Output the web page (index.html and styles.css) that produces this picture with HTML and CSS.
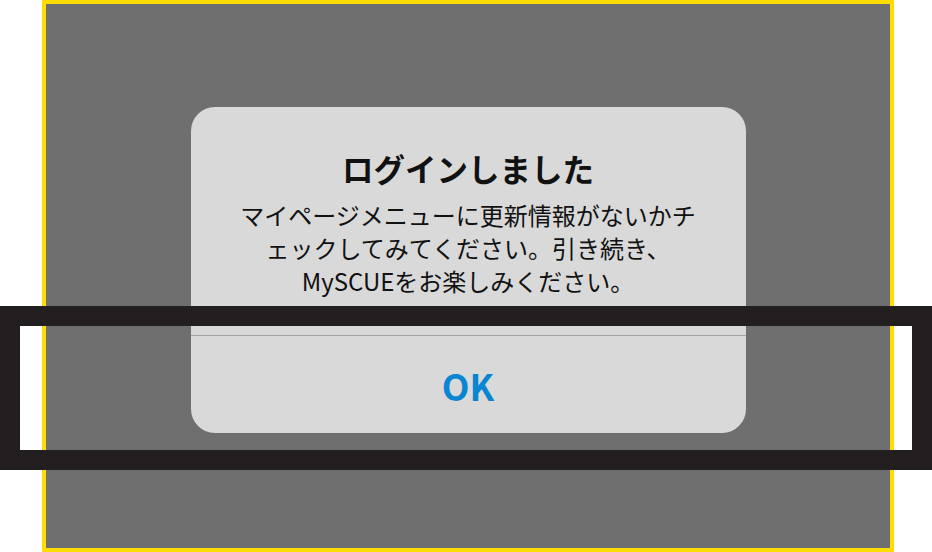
FILE: index.html
```html
<!DOCTYPE html>
<html lang="ja">
<head>
<meta charset="utf-8">
<link rel="stylesheet" href="styles.css">
</head>
<body>
<div class="screen">
  <div class="dialog">
    <div class="dialog-body">
      <h1 class="title">ログインしました</h1>
      <p class="message">マイページメニューに更新情報がないかチ<br>ェックしてみてください。引き続き、<br>MySCUEをお楽しみください。</p>
    </div>
    <div class="dialog-actions">
      <button class="ok">OK</button>
    </div>
  </div>
</div>
<div class="highlight"></div>
</body>
</html>
```
FILE: styles.css
```css
html, body {
  margin: 0;
  padding: 0;
  background: #ffffff;
  width: 932px;
  height: 552px;
  overflow: hidden;
  font-family: "Noto Sans CJK JP", "Noto Sans", sans-serif;
}
.screen {
  margin-left: 42px;
  width: 844px;
  height: 544px;
  border: 4px solid #ffdd00;
  background: #6f6f6f;
  display: flex;
  justify-content: center;
  align-items: flex-start;
}
.dialog {
  margin-top: 103px;
  width: 555px;
  height: 326px;
  background: #d9d9d9;
  border-radius: 24px;
  display: flex;
  flex-direction: column;
  overflow: hidden;
}
.dialog-body {
  padding: 41px 20px 0;
  height: 187px;
  border-bottom: 1px solid #a3a3a3;
  text-align: center;
  color: #111111;
}
.title {
  margin: 0;
  font-size: 31.5px;
  line-height: 40px;
  font-weight: 700;
}
.message {
  margin: 10px 0 0;
  font-size: 24px;
  line-height: 33px;
  font-weight: 400;
}
.dialog-actions {
  flex: 1;
  display: flex;
  align-items: center;
  justify-content: center;
}
.ok {
  background: none;
  border: 0;
  padding: 0;
  font-family: "Noto Sans CJK JP", sans-serif;
  font-size: 36px;
  font-weight: 700;
  color: #0a85d1;
  line-height: 44px;
}
.highlight {
  position: absolute;
  left: 0;
  top: 306px;
  width: 892px;
  height: 124px;
  border: 20px solid #231f20;
}
```
